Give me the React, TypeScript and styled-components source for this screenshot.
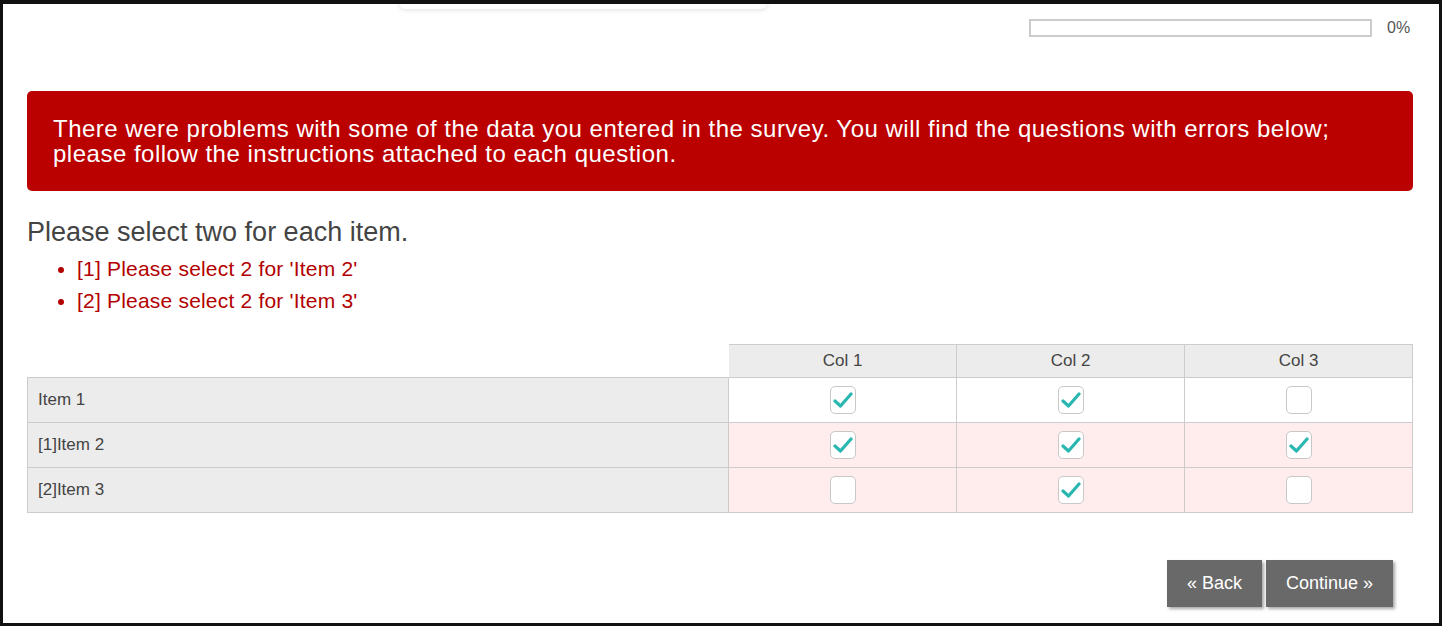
import React from "react";
import styled, { createGlobalStyle } from "styled-components";

const Global = createGlobalStyle`
  html, body {
    margin: 0;
    padding: 0;
    background: #ffffff;
  }
  body {
    font-family: "Liberation Sans", Arial, sans-serif;
    color: #444;
  }
`;

const Frame = styled.div`
  position: relative;
  box-sizing: border-box;
  width: 1442px;
  height: 626px;
  border: 3px solid #111;
  border-top-width: 4px;
  background: #fff;
  overflow: hidden;
`;

const TopPanel = styled.div`
  position: absolute;
  left: 396px;
  top: -20px;
  width: 368px;
  height: 25px;
  background: #fff;
  border-radius: 6px;
  box-shadow: 0 1px 5px rgba(0, 0, 0, 0.12);
`;

const Page = styled.div`
  padding: 0 26px 0 24px;
  display: flex;
  flex-direction: column;
`;

const ProgressRow = styled.div`
  display: flex;
  justify-content: flex-end;
  align-items: center;
  gap: 15px;
  padding-top: 15px;
  height: 18px;
`;

const ProgressTrack = styled.div`
  box-sizing: border-box;
  width: 343px;
  height: 18px;
  border: 2px solid #ccc;
  background: #fff;
`;

const ProgressLabel = styled.span`
  font-size: 16px;
  color: #555;
  width: 26px;
`;

const Alert = styled.div`
  margin-top: 54px;
  background: #bb0000;
  border-radius: 5px;
  color: #fff;
  font-size: 24px;
  letter-spacing: 0.5px;
  line-height: 25px;
  padding: 25px 26px 25px 26px;
`;

const Question = styled.h2`
  margin: 26px 0 0 0;
  font-size: 27px;
  font-weight: normal;
  color: #444;
  line-height: 30px;
`;

const ErrorList = styled.ul`
  margin: 6px 0 0 0;
  padding-left: 50px;
  color: #b30000;
  font-size: 21px;
  letter-spacing: 0.2px;
  line-height: 32px;
`;

const Grid = styled.table`
  margin-top: 27px;
  width: 100%;
  border-collapse: collapse;
  font-size: 17px;
  color: #444;
`;

const HeadCell = styled.th<{ $blank?: boolean }>`
  height: 32px;
  padding: 0;
  font-weight: normal;
  text-align: center;
  background: ${(p) => (p.$blank ? "#fff" : "#ececec")};
  border: 1px solid ${(p) => (p.$blank ? "transparent" : "#ccc")};
  border-bottom-color: #ccc;
  width: ${(p) => (p.$blank ? "700px" : "auto")};
`;

const LabelCell = styled.td`
  height: 44px;
  padding: 0 10px;
  background: #ececec;
  border: 1px solid #ccc;
`;

const CheckCell = styled.td<{ $error?: boolean }>`
  padding: 0;
  text-align: center;
  vertical-align: middle;
  background: ${(p) => (p.$error ? "#ffeded" : "#fff")};
  border: 1px solid #ccc;
`;

const Box = styled.span`
  display: inline-flex;
  align-items: center;
  justify-content: center;
  box-sizing: border-box;
  width: 26px;
  height: 28px;
  border: 1px solid #c8c8c8;
  border-radius: 5px;
  background: #fff;
  vertical-align: middle;
`;

const Actions = styled.div`
  display: flex;
  justify-content: flex-end;
  gap: 4px;
  margin-top: 47px;
  padding-right: 20px;
`;

const NavButton = styled.button`
  height: 47px;
  padding: 0 20px;
  border: none;
  background: #696969;
  color: #fff;
  font-family: "Liberation Sans", Arial, sans-serif;
  font-size: 18px;
  box-shadow: 2px 2px 3px rgba(0, 0, 0, 0.35);
  cursor: pointer;
`;

const Check: React.FC<{ on: boolean }> = ({ on }) => (
  <Box>
    {on && (
      <svg width="20" height="18" viewBox="0 0 20 18">
        <path
          d="M2 10 L7.5 15 L18 3"
          fill="none"
          stroke="#2ab7b1"
          strokeWidth="3.2"
          strokeLinecap="round"
          strokeLinejoin="round"
        />
      </svg>
    )}
  </Box>
);

const rows = [
  { label: "Item 1", error: false, values: [true, true, false] },
  { label: "[1]Item 2", error: true, values: [true, true, true] },
  { label: "[2]Item 3", error: true, values: [false, true, false] },
];

const App: React.FC = () => (
  <Frame>
    <Global />
    <TopPanel />
    <Page>
      <ProgressRow>
        <ProgressTrack />
        <ProgressLabel>0%</ProgressLabel>
      </ProgressRow>
      <Alert>
        There were problems with some of the data you entered in the survey. You will find the questions with errors below;
        <br />
        please follow the instructions attached to each question.
      </Alert>
      <Question>Please select two for each item.</Question>
      <ErrorList>
        <li>[1] Please select 2 for 'Item 2'</li>
        <li>[2] Please select 2 for 'Item 3'</li>
      </ErrorList>
      <Grid>
        <thead>
          <tr>
            <HeadCell $blank />
            <HeadCell>Col 1</HeadCell>
            <HeadCell>Col 2</HeadCell>
            <HeadCell>Col 3</HeadCell>
          </tr>
        </thead>
        <tbody>
          {rows.map((r) => (
            <tr key={r.label}>
              <LabelCell>{r.label}</LabelCell>
              {r.values.map((v, i) => (
                <CheckCell key={i} $error={r.error}>
                  <Check on={v} />
                </CheckCell>
              ))}
            </tr>
          ))}
        </tbody>
      </Grid>
      <Actions>
        <NavButton>« Back</NavButton>
        <NavButton>Continue »</NavButton>
      </Actions>
    </Page>
  </Frame>
);

export default App;
